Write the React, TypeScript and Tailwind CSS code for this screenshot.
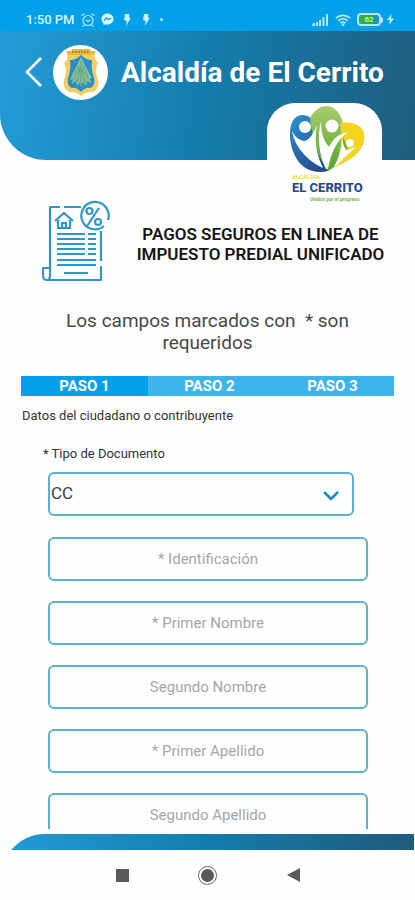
import React from "react";

const fields = [
  { id: "identificacion", label: "* Identificación" },
  { id: "primer-nombre", label: "* Primer Nombre" },
  { id: "segundo-nombre", label: "Segundo Nombre" },
  { id: "primer-apellido", label: "* Primer Apellido" },
  { id: "segundo-apellido", label: "Segundo Apellido" },
];

function Bolt() {
  return (
    <svg width="8" height="14" viewBox="0 0 8 14" fill="#c9f0ff" aria-hidden="true">
      <path d="M2 1h4.500L6 4l1.500 1.500L3 13l.7-5L1 7z" />
    </svg>
  );
}

function StatusBar() {
  return (
    <div className="flex h-[31px] shrink-0 items-center justify-between bg-[#02a0e8] pt-2 pr-[21px] pl-[26px] text-[#d3f3ff]">
      <div className="flex items-center">
        <span className="w-[55px] text-[13px] leading-4 font-medium whitespace-nowrap">1:50 PM</span>
        <svg width="14" height="14" viewBox="0 0 14 14" fill="none" stroke="#b5e8fc" strokeWidth="1.2" strokeLinecap="round" aria-hidden="true">
          <circle cx="7" cy="7.5" r="5" />
          <path d="M1 2.500 3 1M13 2.500 11 1M3 12l-1 1.500M11 12l1 1.500M5 7l2 1.500L9 7" />
        </svg>
        <svg className="ml-[6px]" width="13" height="13" viewBox="0 0 13 13" aria-hidden="true">
          <path fill="#dbf6ff" d="M6.500.5C3 .5.5 3 .5 6c0 1.700.8 3.100 2 4.100v2.200l2-1.100c.6.200 1.300.3 2 .3 3.500 0 6-2.500 6-5.500s-2.500-5.500-6-5.500z" />
          <path d="m3 7.500 2.400-2.600 2 1.600L10 5" fill="none" stroke="#02a0e8" strokeWidth="1.400" />
        </svg>
        <span className="ml-[9px] flex gap-[11px]">
          <Bolt />
          <Bolt />
        </span>
        <span className="ml-[10px] size-[3px] rounded-full bg-[#b5e8fc]" />
      </div>
      <div className="flex items-center">
        <svg width="17" height="12" viewBox="0 0 17 12" fill="#b5e8fc" aria-hidden="true">
          <path d="M1 9h2v3H0zM4 8h2v4H4zM7 6h2v6H7zM10.500 3h2v9h-2zM14 0h2v12h-2z" />
        </svg>
        <svg className="ml-[6px]" width="16" height="12" viewBox="0 0 16 12" fill="none" stroke="#b5e8fc" strokeWidth="1.800" aria-hidden="true">
          <path d="M.8 4.200C5 .3 11 .3 15.200 4.200M3.200 6.800c2.800-2.500 6.800-2.500 9.600 0M5.600 9.200c1.400-1.300 3.400-1.300 4.800 0" />
          <circle cx="8" cy="11" r=".5" />
        </svg>
        <span className="ml-[6px] flex items-center">
          <span className="flex h-[13px] w-[24px] items-center justify-center rounded-[4px] border-2 border-[#b5e8fc] bg-linear-to-r from-[#2cae4c] from-70% to-[#1793cf] to-70% text-[8px] leading-[8px] font-bold text-[#c6f08a]">
            62
          </span>
          <span className="h-[6px] w-[2px] rounded-r-sm bg-[#b5e8fc]" />
        </span>
        <svg className="ml-[4px]" width="7" height="11" viewBox="0 0 7 11" fill="#d3f3ff" aria-hidden="true">
          <path d="M4.500 0 0 6h3L2 11l5-6.500H4z" />
        </svg>
      </div>
    </div>
  );
}

function Crest() {
  return (
    <span className="flex size-[55px] shrink-0 items-center justify-center rounded-full bg-white">
      <svg width="38" height="50" viewBox="0 0 38 50" aria-hidden="true">
        <path d="M5 6h28c-1 4 1 7 3 9-3 6-2 11 0 17 1 6-1 11-6 12-4 0-8 1-11 4-3-3-7-4-11-4-5-1-7-6-6-12 2-6 3-11 0-17 3-2 4-5 3-9z" fill="#f2cf62" />
        <path d="M8 12c4 0 8-2 11-5 3 3 7 5 11 5-1 6 0 12 2 18 1 6-1 9-4 10-3-1-6 1-9 4-3-3-6-5-9-4-3-1-5-4-4-10 2-6 3-12 2-18z" fill="#2b8ec6" />
        <path d="m19 9-3 6-4 8-4 9 3-1-1 5 4-3 1 5 3-4 1 5 2-5 3 4 1-5 4 2-1-5 2 0-4-7-4-8z" fill="#86bf9c" />
        <path d="M19 13v25M17 18l-5 13M21 18l5 13M18 20l-3 15M20 20l3 15" stroke="#5ba377" strokeWidth="1" fill="none" />
        <path d="M4 3h5l1-2h18l1 2h5l-2 4H6z" fill="#e5b83f" />
        <path d="M10 4h18" stroke="#b98a35" strokeWidth="2" strokeDasharray="2 1" />
      </svg>
    </span>
  );
}

function TownLogo() {
  return (
    <div className="mr-[33px] -mt-[57px] flex h-[103px] w-[115px] shrink-0 flex-col items-start self-end rounded-t-[28px] bg-[#fefefe] pt-[2px] pl-[21px]">
      <svg width="78" height="68" viewBox="0 0 78 68" aria-hidden="true">
        <defs>
          <linearGradient id="town-blue" x1="0" y1="0" x2="0.600" y2="1">
            <stop offset="0" stopColor="#2c92cf" />
            <stop offset="1" stopColor="#284e92" />
          </linearGradient>
          <linearGradient id="town-green" x1="0" y1="0" x2="0" y2="1">
            <stop offset="0" stopColor="#a8cc6c" />
            <stop offset="1" stopColor="#56a531" />
          </linearGradient>
        </defs>
        <path d="M2 33C1 19 6 10 14 10c6 0 10 3 13 9l13 47c-8 2-17 1-24-4C8 56 3 45 2 33z" fill="url(#town-blue)" />
        <path d="M22 13C27 4 33 1 39 1s12 5 15 14c4 13 3 29-4 40-3 6-6 9-10 11C30 54 24 32 22 13z" fill="url(#town-green)" />
        <path d="M52 18c12-2 23 2 24 11 2 10-5 20-15 26-5 3-9 5-15 7 7-13 9-29 6-44z" fill="#f4d321" />
        <path d="M42 64c8-8 12-18 13-33l5 14c-3 9-9 15-18 19z" fill="#69af34" />
        <g fill="#fefefe">
          <circle cx="17" cy="22" r="6" />
          <circle cx="44" cy="21" r="6.500" />
          <circle cx="62" cy="38" r="4" />
          <path d="M4 26c3 6 7 9 12 10 6-1 9-7 13-16-3 14-1 29 6 43C22 57 7 44 4 26z" />
          <path d="M33 16c0 11 2 19 8 26 4-8 9-13 19-15-11 8-17 20-20 37h-2c-7-14-9-32-5-48z" />
          <path d="M54 31c1 8 2 12 5 14 4-1 6-2 9-3-5 5-9 8-12 11-3 4-6 6-10 9 5-9 8-19 8-31z" />
        </g>
      </svg>
      <span className="ml-[4px] text-[6px] leading-[8px] font-bold whitespace-nowrap text-[#ece34a]">ALCALDÍA</span>
      <span className="ml-[4px] text-[13px] leading-[14px] font-extrabold whitespace-nowrap text-[#24498a]">EL CERRITO</span>
      <span className="ml-[22px] text-[5px] leading-[8px] font-bold whitespace-nowrap text-[#79ad4d] italic">Unidos por el progreso</span>
    </div>
  );
}

function TaxDocumentIcon() {
  return (
    <svg className="shrink-0" width="68" height="82" viewBox="0 0 68 82" fill="none" stroke="#3196c6" strokeWidth="2.200" strokeLinejoin="round" aria-hidden="true">
      <path d="M18 7H8v61M22 7h17M59 31v30M59 66v14H5c-4 0-4-3-4-6v-6h7v8c0 2-1 4-3 4" />
      <path d="M62 26a13.700 13.700 0 1 1 4-6" />
      <path d="m57 8-12 18" />
      <circle cx="47.500" cy="11" r="3" />
      <circle cx="56" cy="22" r="3" />
      <path d="m13 21 9-8 9 8M16 20v8h12v-8M20 28v-5h4v5" />
      <path d="M15 34h28M46 34h8M15 39h28M46 39h8M15 44h28M46 44h8M15 49h28M46 49h8M15 54h28M46 54h8M15 60h39M15 65h39M22 73h24" />
    </svg>
  );
}

export default function App() {
  return (
    <div className="flex h-screen flex-col overflow-hidden bg-[#fefefe] font-[Roboto,sans-serif]">
      <StatusBar />
      <header className="flex h-[129px] shrink-0 items-start rounded-bl-[46px] bg-linear-[100deg] from-[#259cd7] via-[#147cac] via-50% to-[#205d7d] pt-[14px] pl-[25px]">
        <button type="button" aria-label="Volver" className="mt-[12px] mr-[10px] h-[30px] w-[18px]">
          <svg width="18" height="30" viewBox="0 0 18 30" fill="none" stroke="#fff" strokeWidth="2.600" aria-hidden="true">
            <path d="M16 1 2 15l14 14" />
          </svg>
        </button>
        <Crest />
        <h1 className="ml-[13px] pt-[10px] text-[28px] leading-[36px] font-bold whitespace-nowrap text-white">Alcaldía de El Cerrito</h1>
      </header>
      <TownLogo />

      <main className="-mt-[6px] flex min-h-0 flex-1 flex-col">
        <section className="flex items-center pr-[20px] pl-[42px]">
          <TaxDocumentIcon />
          <h2 className="flex-1 pt-[6px] pl-[16px] text-center text-[17px] leading-[20px] font-semibold whitespace-nowrap text-[#151515]">
            PAGOS SEGUROS EN LINEA DE
            <br />
            IMPUESTO PREDIAL UNIFICADO
          </h2>
        </section>

        <p className="mt-[28px] text-center text-[19px] leading-[22px] whitespace-pre text-[#484848]">
          {"Los campos marcados con  * son\nrequeridos"}
        </p>

        <ol className="mx-[21px] mt-[22px] grid grid-cols-[34%_33%_33%] bg-[#3db4ea] text-center text-[15px] leading-[20px] font-bold text-white">
          <li className="bg-[#02a0e8]" aria-current="step">PASO 1</li>
          <li>PASO 2</li>
          <li>PASO 3</li>
        </ol>
        <p className="mt-[12px] ml-[22px] text-[13px] leading-4 text-[#333]">Datos del ciudadano o contribuyente</p>

        <form className="mt-[22px] min-h-0 flex-1 overflow-hidden pr-[47px] pl-[48px]">
          <label htmlFor="tipo" className="-ml-[5px] block text-[13px] leading-4 text-[#333]">
            * Tipo de Documento
          </label>
          <div className="relative mt-[10px] mr-[14px]">
            <select id="tipo" className="block h-[44px] w-full appearance-none rounded-[6px] border-2 border-[#5caed4] bg-transparent pl-px text-[17px] text-[#3b3b3b]">
              <option>CC</option>
            </select>
            <svg className="pointer-events-none absolute top-[18px] right-[14px]" width="18" height="11" viewBox="0 0 18 11" fill="none" stroke="#1c88bd" strokeWidth="2.600" aria-hidden="true">
              <path d="m2 2 7 7 7-7" />
            </svg>
          </div>
          <div className="mt-[21px] flex flex-col gap-5">
            {fields.map((field) => (
              <input
                key={field.id}
                id={field.id}
                aria-label={field.label}
                placeholder={field.label}
                className="block h-[44px] w-full rounded-[6px] border-2 border-[#5caed4] bg-transparent text-center text-[15px] placeholder:text-[#a6a6a6]"
              />
            ))}
          </div>
        </form>
      </main>

      <footer className="shrink-0 pt-[5px]">
        <svg className="ml-[11px] block h-[16px] w-[calc(100%-12px)]" viewBox="0 0 403 16" preserveAspectRatio="none" aria-hidden="true">
          <defs>
            <linearGradient id="footer-blue">
              <stop offset="0" stopColor="#209bd5" />
              <stop offset="0.500" stopColor="#147cac" />
              <stop offset="1" stopColor="#205a7b" />
            </linearGradient>
          </defs>
          <path d="M0 16C9 6 20 0 34 0h369v16z" fill="url(#footer-blue)" />
        </svg>
        <nav className="flex h-[50px] items-center justify-center gap-[68px]">
          <button type="button" aria-label="Recientes" className="flex h-5 w-4 items-center justify-center">
            <span className="size-[13px] bg-[#5a5a5a]" />
          </button>
          <button type="button" aria-label="Inicio" className="flex size-[19px] items-center justify-center rounded-full border border-[#666]">
            <span className="size-[13px] rounded-full bg-[#5a5a5a]" />
          </button>
          <button type="button" aria-label="Atrás" className="flex h-5 w-4 items-center justify-center">
            <svg width="13" height="14" viewBox="0 0 13 14" fill="#5a5a5a" aria-hidden="true">
              <path d="M13 0v14L0 7z" />
            </svg>
          </button>
        </nav>
      </footer>
    </div>
  );
}
